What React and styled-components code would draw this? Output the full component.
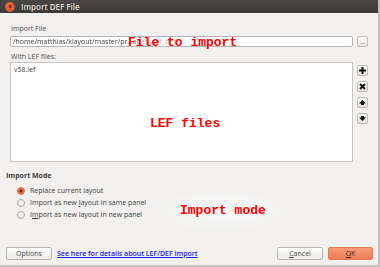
import React from "react";
import styled, { createGlobalStyle } from "styled-components";

const Global = createGlobalStyle`
  html, body { margin: 0; padding: 0; background: #f2f1f0; }
  body { font-family: "Open Sans", "Liberation Sans", sans-serif; font-size: 7px; color: #3c3c3c; }
  #root { width: 380px; height: 267px; }
`;

const Window = styled.div`
  position: relative;
  width: 380px;
  height: 267px;
  box-sizing: border-box;
  background: #f2f1f0;
  border-right: 2px solid #c2c1bd;
  border-bottom: 2px solid #c2c1bd;
  display: flex;
  flex-direction: column;
  overflow: hidden;
`;

const TitleBar = styled.div`
  height: 13px;
  background: linear-gradient(#494844, #3b3a36);
  display: flex;
  align-items: center;
  gap: 6px;
  padding-left: 5px;
  flex: none;
`;

const CloseBtn = styled.div`
  width: 10px;
  height: 10px;
  border-radius: 50%;
  background: radial-gradient(circle at 45% 40%, #f26f4b, #d8461f);
  display: flex;
  align-items: center;
  justify-content: center;
  color: #3a1c10;
  font-size: 7px;
  line-height: 1;
  font-weight: bold;
`;

const Title = styled.div`
  color: #dfdbd2;
  font-size: 8px;
  font-weight: 600;
`;

const Body = styled.div`
  flex: 1;
  display: flex;
  flex-direction: column;
  padding: 11px 5px 5px 6px;
  & > * { flex-shrink: 0; }
`;

const Label = styled.div`
  padding-left: 5px;
  color: #4c4c4c;
  height: 9px;
  line-height: 9px;
  margin-top: ${p => p.$mt || 0}px;
`;

const Row = styled.div`
  display: flex;
  gap: 4px;
  padding-left: 4px;
  margin-top: ${p => p.$mt || 0}px;
  align-items: ${p => p.$top ? "flex-start" : "center"};
`;

const TextField = styled.div`
  flex: 1;
  height: 11px;
  box-sizing: border-box;
  border: 1px solid #b8b6b2;
  border-radius: 2px;
  background: #fff;
  line-height: 9px;
  padding-left: 2px;
  white-space: nowrap;
  overflow: hidden;
`;

const FadeText = styled.span`
  color: #3c3c3c;
  -webkit-mask-image: linear-gradient(to right, #000 68%, rgba(0,0,0,0.35) 80%);
  mask-image: linear-gradient(to right, #000 68%, rgba(0,0,0,0.35) 80%);
  display: inline-block;
`;

const SmallBtn = styled.div`
  width: 11px;
  height: 11px;
  box-sizing: border-box;
  border: 1px solid #bdbbb6;
  border-radius: 2px;
  background: linear-gradient(#fafafa, #e6e5e2);
  display: flex;
  align-items: center;
  justify-content: center;
  color: #444;
  font-size: 6px;
  line-height: 1;
  margin-right: ${p => p.$mr || 0}px;
`;

const ListBox = styled.div`
  flex: 1;
  height: 100px;
  box-sizing: border-box;
  border: 1px solid #c8c6c2;
  background: #fff;
  padding: 2px 3px;
  color: #3c3c3c;
  line-height: 9px;
`;

const SideButtons = styled.div`
  display: flex;
  flex-direction: column;
  gap: 5px;
  padding-top: 3px;
  padding-right: 5px;
`;

const SectionTitle = styled.div`
  font-weight: 700;
  color: #3c3c3c;
  margin-top: 9px;
  height: 10px;
  line-height: 10px;
`;

const Radios = styled.div`
  display: flex;
  flex-direction: column;
  gap: 3px;
  padding-left: 11px;
  margin-top: 5px;
`;

const RadioRow = styled.label`
  display: flex;
  align-items: center;
  gap: 5px;
  height: 9px;
  color: #3c3c3c;
`;

const RadioDot = styled.span`
  width: 8px;
  height: 8px;
  box-sizing: border-box;
  border-radius: 50%;
  border: 1px solid ${p => p.$on ? "#d9673f" : "#a8a6a1"};
  background: ${p => p.$on
    ? "radial-gradient(circle, #7a2a10 0 1.3px, #e8744b 1.8px, #f08a63)"
    : "linear-gradient(#ffffff, #ecebe8)"};
`;

const U = styled.span`
  text-decoration: underline;
`;

const Spacer = styled.div`
  flex: 1;
`;

const Footer = styled.div`
  display: flex;
  align-items: center;
  gap: 5px;
`;

const Button = styled.div`
  height: 13px;
  width: ${p => p.$w}px;
  box-sizing: border-box;
  border: 1px solid ${p => p.$primary ? "#e27a54" : "#b8b6b1"};
  border-radius: 2px;
  background: ${p => p.$primary
    ? "linear-gradient(#f79a78, #ef7f58)"
    : "linear-gradient(#fdfdfc, #ebeae7)"};
  display: flex;
  align-items: center;
  justify-content: center;
  color: ${p => p.$primary ? "#4a2516" : "#4a4a4a"};
`;

const Link = styled.a`
  color: #2020ee;
  text-decoration: underline;
  font-weight: 600;
`;

const Note = styled.div`
  position: absolute;
  left: ${p => p.$x}px;
  top: ${p => p.$y}px;
  font-family: "Liberation Mono", "Courier New", monospace;
  font-weight: bold;
  font-size: 13px;
  color: #ff0000;
  line-height: 13px;
  white-space: nowrap;
  padding: ${p => p.$glow ? "16px 28px" : "0"};
  margin: ${p => p.$glow ? "-16px -28px" : "0"};
  background: ${p => p.$glow ? "radial-gradient(closest-side, rgba(255,255,255,0.6), rgba(255,255,255,0))" : "none"};
`;

export default function App() {
  return (
    <>
      <Global />
      <Window>
        <TitleBar>
          <CloseBtn>×</CloseBtn>
          <Title>Import DEF File</Title>
        </TitleBar>
        <Body>
          <Label>Import File</Label>
          <Row $mt={3}>
            <TextField>
              <FadeText>/home/matthias/klayout/master/pr…adata/lef_def/</FadeText>
            </TextField>
            <SmallBtn $mr={5}>…</SmallBtn>
          </Row>
          <Label $mt={5}>With LEF files:</Label>
          <Row $top $mt={1}>
            <ListBox>v58.lef</ListBox>
            <SideButtons>
              <SmallBtn>
                <svg width="7" height="7" viewBox="0 0 7 7"><path d="M2.5 0h2v2.5H7v2H4.5V7h-2V4.5H0v-2h2.5z" fill="#111" /></svg>
              </SmallBtn>
              <SmallBtn>
                <svg width="7" height="7" viewBox="0 0 7 7"><path d="M1 1L6 6M6 1L1 6" stroke="#111" strokeWidth="1.8" /></svg>
              </SmallBtn>
              <SmallBtn>
                <svg width="7" height="7" viewBox="0 0 7 7"><path d="M3.5 1L7 4.5H5V6H2V4.5H0z" fill="#111" /></svg>
              </SmallBtn>
              <SmallBtn>
                <svg width="7" height="7" viewBox="0 0 7 7"><path d="M3.5 6L7 2.5H5V1H2V2.5H0z" fill="#111" /></svg>
              </SmallBtn>
            </SideButtons>
          </Row>
          <SectionTitle>Import Mode</SectionTitle>
          <Radios>
            <RadioRow><RadioDot $on /><span>Replace current layout</span></RadioRow>
            <RadioRow><RadioDot /><span>Import as new <U>l</U>ayout in same panel</span></RadioRow>
            <RadioRow><RadioDot /><span>I<U>m</U>port as new layout in new panel</span></RadioRow>
          </Radios>
          <Spacer />
          <Footer>
            <Button $w={46}>Options</Button>
            <Link>See here for details about LEF/DEF import</Link>
            <Spacer />
            <Button $w={46}><span><U>C</U>ancel</span></Button>
            <Button $w={45} $primary><span><U>O</U>K</span></Button>
          </Footer>
        </Body>
        <Note $x={128} $y={36}>File to import</Note>
        <Note $x={150} $y={117}>LEF files</Note>
        <Note $x={180} $y={204} $glow>Import mode</Note>
      </Window>
    </>
  );
}
